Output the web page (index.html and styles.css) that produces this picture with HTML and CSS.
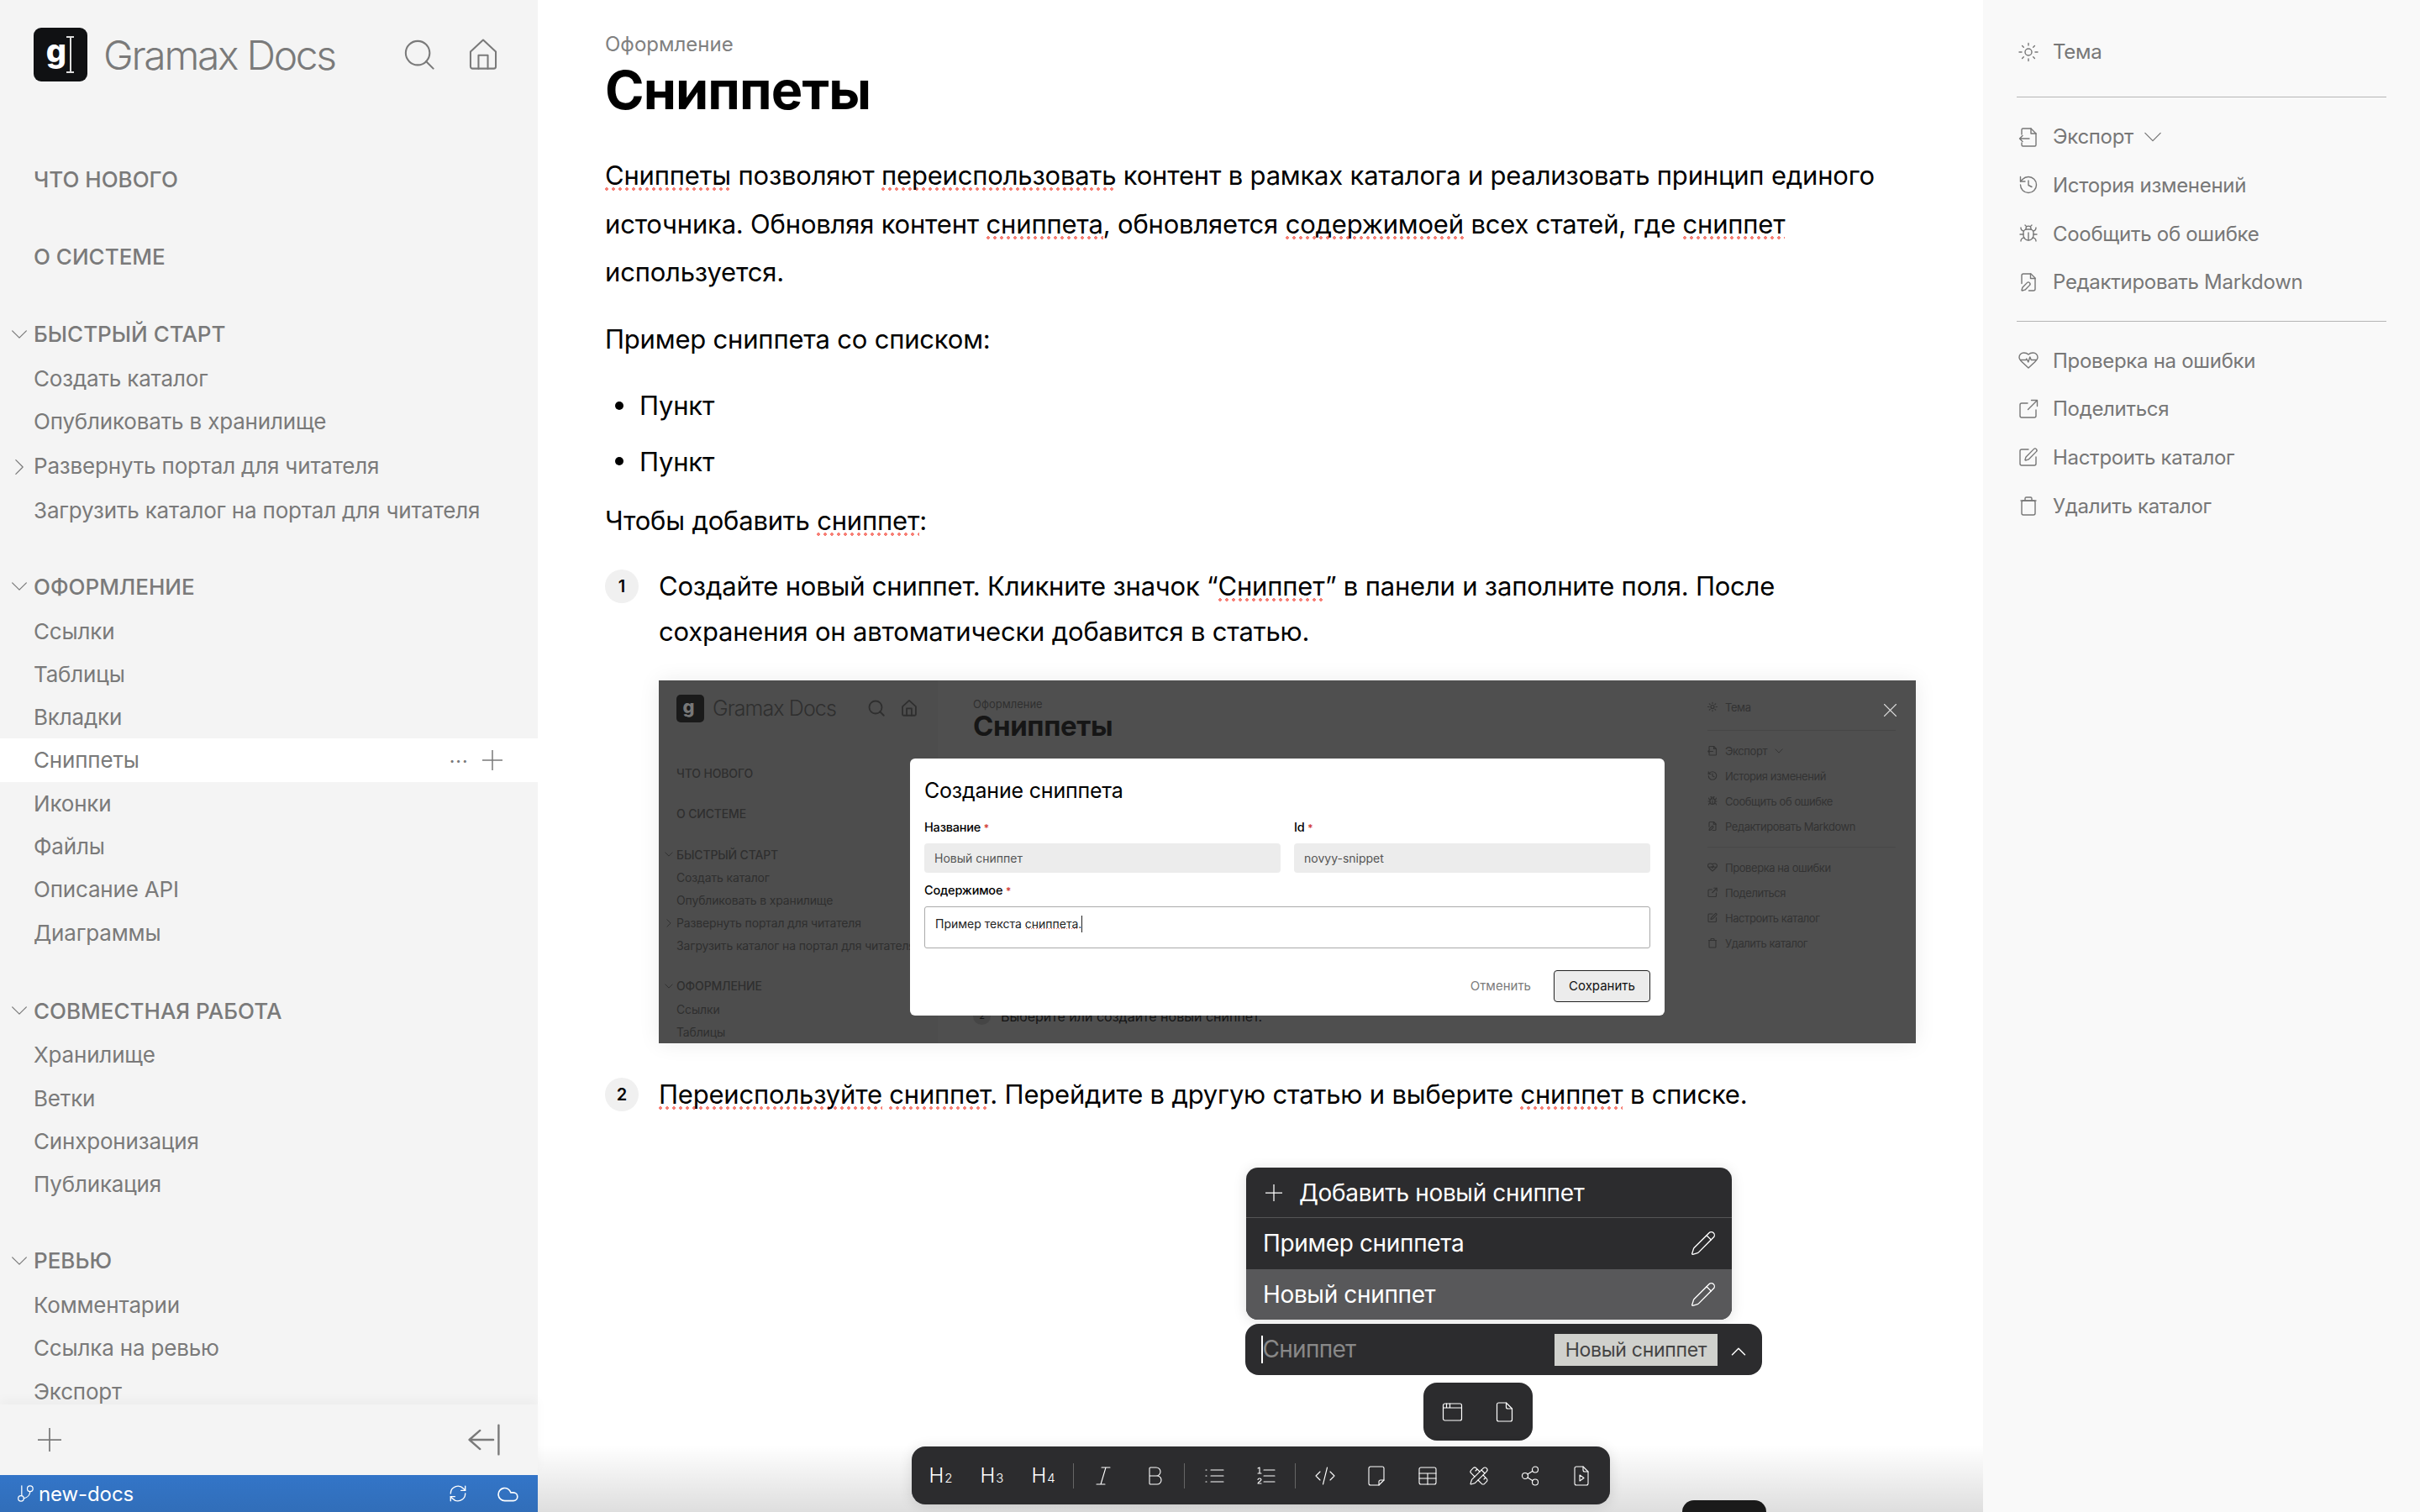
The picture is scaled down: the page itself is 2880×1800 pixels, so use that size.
FILE: index.html
```html
<!DOCTYPE html>
<html lang="ru">
<head>
    <meta charset="UTF-8">
    <title>Сниппеты - Gramax Docs</title>
    <link rel="stylesheet" href="styles.css">
</head>
<body>
    <svg class="sprite" xmlns="http://www.w3.org/2000/svg">
        <symbol id="i-search" viewBox="0 0 24 24"><circle cx="10.8" cy="10.8" r="9"/><path d="M22.5 22.5l-5.4-5.4"/></symbol>
        <symbol id="i-home" viewBox="0 0 24 24"><path d="M2.5 9.8 12 1l9.5 8.8V21a1.5 1.5 0 0 1-1.5 1.5H4A1.5 1.5 0 0 1 2.5 21z"/><path d="M8.5 22.5V12.5h7v10"/></symbol>
        <symbol id="i-sun" viewBox="0 0 24 24"><circle cx="12" cy="12" r="4"/><path d="M12 1.5V4M12 20v2.5M4.600 4.600l1.700 1.700M17.700 17.700l1.700 1.700M1 12h3M20 12h3M4.600 19.400l1.700-1.700M17.700 6.300l1.700-1.700"/></symbol>
        <symbol id="i-export" viewBox="0 0 24 24"><path d="M4 9V3.5A1.5 1.5 0 0 1 5.5 2H15l6 6v13.5a1.5 1.500 0 0 1-1.5 1.5h-14A1.500 1.500 0 0 1 4 21.500V19"/><path d="M15 2v6h6"/><path d="M13 14H1.500m3.500-3.500L1.500 14 5 17.500"/></symbol>
        <symbol id="i-history" viewBox="0 0 24 24"><path d="M2.5 12a9.500 9.500 0 1 0 9.500-9.500 10 10 0 0 0-7 2.900L2.500 8"/><path d="M2.500 2.500V8H8"/><path d="M12 7v5.500l4 2"/></symbol>
        <symbol id="i-bug" viewBox="0 0 24 24"><path d="m8 2 1.880 1.880M14.120 3.880 16 2M9 7.130v-1a3 3 0 1 1 6 0v1"/><path d="M12 20c-3.300 0-6-2.700-6-6v-3a4 4 0 0 1 4-4h4a4 4 0 0 1 4 4v3c0 3.300-2.700 6-6 6"/><path d="M12 20v-9M6.530 9C4.600 8.800 3 7.100 3 5M6 13H2M3 21c0-2.100 1.700-3.900 3.800-4M20.970 5c0 2.100-1.600 3.800-3.500 4M22 13h-4M17.200 17c2.100.1 3.800 1.900 3.800 4"/></symbol>
        <symbol id="i-filepen" viewBox="0 0 24 24"><path d="M12.500 22H18a2 2 0 0 0 2-2V7l-5-5H6a2 2 0 0 0-2 2v9.500"/><path d="M14.500 2v5.500H20"/><path d="M13.378 15.626a1 1 0 1 0-3.004-3.004l-5.010 5.012a2 2 0 0 0-.506.854l-.837 2.870a.5.5 0 0 0 .62.62l2.870-.837a2 2 0 0 0 .854-.506z"/></symbol>
        <symbol id="i-heart" viewBox="0 0 24 24"><path d="M19 14.500c1.490-1.460 4-3.710 4-6A5.500 5.500 0 0 0 17.500 3c-1.760 0-4 .5-5.500 2-1.500-1.500-3.740-2-5.500-2A5.500 5.500 0 0 0 1 8.500c0 2.300 2.500 4.550 4 6l7 6.500Z"/><path d="M2.500 11.500h6.500l.8-1.500 2 4 2-6 1.500 3.500h6"/></symbol>
        <symbol id="i-link" viewBox="0 0 24 24"><path d="M21 13v7a2 2 0 0 1-2 2H4a2 2 0 0 1-2-2V7a2 2 0 0 1 2-2h7"/><path d="m22.500 1.500-11 11M15.500 1.500h7v7"/></symbol>
        <symbol id="i-edit" viewBox="0 0 24 24"><path d="M12 3H4a2 2 0 0 0-2 2v15a2 2 0 0 0 2 2h15a2 2 0 0 0 2-2v-8"/><path d="M18.375 2.625a1 1 0 0 1 3 3l-9.013 9.014a2 2 0 0 1-.853.505l-2.873.84a.5.5 0 0 1-.62-.62l.84-2.873a2 2 0 0 1 .506-.852z"/></symbol>
        <symbol id="i-trash" viewBox="0 0 24 24"><rect x="4" y="6" width="16" height="17" rx="2"/><path d="M3 6h18M8 6V3.500A1.500 1.500 0 0 1 9.500 2h5A1.500 1.500 0 0 1 16 3.500V6"/></symbol>
        <symbol id="i-down" viewBox="0 0 24 24"><path d="M2 7l10 10L22 7"/></symbol>
        <symbol id="i-up" viewBox="0 0 24 24"><path d="M2 17 12 7l10 10"/></symbol>
        <symbol id="i-right" viewBox="0 0 24 24"><path d="M7 2l10 10L7 22"/></symbol>
        <symbol id="i-plus" viewBox="0 0 24 24"><path d="M12 0v24M0 12h24"/></symbol>
        <symbol id="i-close" viewBox="0 0 24 24"><path d="M1 1l22 22M23 1 1 23"/></symbol>
        <symbol id="i-collapse" viewBox="0 0 24 24"><path d="M23 1v22M19 12H1m8-7-8 7 8 7"/></symbol>
        <symbol id="i-branch" viewBox="0 0 24 24"><path d="M7 1v14"/><circle cx="6" cy="19" r="4"/><circle cx="19" cy="5" r="4"/><path d="M19 9a11 11 0 0 1-9 10"/></symbol>
        <symbol id="i-sync" viewBox="0 0 24 24"><path d="M2.500 12a9.500 9.500 0 0 1 16.500-6.500L21.500 8"/><path d="M21.500 2.500V8H16"/><path d="M21.500 12a9.500 9.500 0 0 1-16.500 6.500L2.500 16"/><path d="M8 16H2.500v5.500"/></symbol>
        <symbol id="i-cloud" viewBox="0 0 24 24"><path d="M17.500 20H8a7 7 0 1 1 6.710-9h2.790a4.500 4.500 0 1 1 0 9Z"/></symbol>
        <symbol id="i-pencil" viewBox="0 0 24 24"><path d="M21.174 6.812a1 1 0 0 0-3.986-3.987L3.842 16.174a2 2 0 0 0-.5.83l-1.321 4.352a.5.5 0 0 0 .623.622l4.353-1.320a2 2 0 0 0 .83-.497z"/><path d="m15 5 4 4"/></symbol>
        <symbol id="i-italic" viewBox="0 0 24 24"><path d="M20 2h-10M14 22H4M15 2 9 22"/></symbol>
        <symbol id="i-bold" viewBox="0 0 24 24"><path d="M6 12h9a5 5 0 0 1 0 10H7a1 1 0 0 1-1-1V3a1 1 0 0 1 1-1h7a5 5 0 0 1 0 10"/></symbol>
        <symbol id="i-ul" viewBox="0 0 24 24"><path d="M8 5h15M8 12h15M8 19h15M2 5h1M2 12h1M2 19h1"/></symbol>
        <symbol id="i-ol" viewBox="0 0 24 24"><path d="M10 5h13M10 12h13M10 19h13M3 3l2-1v7M3 9h4M7 21H3c0-2 4-2.500 4-4.500 0-1-1-1.500-2-1.500s-2 .5-2 1.500"/></symbol>
        <symbol id="i-code" viewBox="0 0 24 24"><path d="m18 17 5-5-5-5M6 7l-5 5 5 5M14.500 2l-5 20"/></symbol>
        <symbol id="i-note" viewBox="0 0 24 24"><path d="M15 23H5a2 2 0 0 1-2-2V3a2 2 0 0 1 2-2h14a2 2 0 0 1 2 2v14z"/><path d="M15 23v-4a2 2 0 0 1 2-2h4"/></symbol>
        <symbol id="i-table" viewBox="0 0 24 24"><rect x="2" y="2" width="20" height="20" rx="2"/><path d="M2 9h20M2 15h20M12 9v13"/></symbol>
        <symbol id="i-draw" viewBox="0 0 24 24"><path d="M13 7 8.700 2.700a2.410 2.410 0 0 0-3.400 0L2.700 5.300a2.410 2.410 0 0 0 0 3.400L7 13M8 6l2-2M18 16l2-2M17 11l4.300 4.300c.94.94.94 2.460 0 3.400l-2.600 2.600c-.94.94-2.460.94-3.400 0L11 17"/><path d="M21.174 6.812a1 1 0 0 0-3.986-3.987L3.842 16.174a2 2 0 0 0-.5.83l-1.321 4.352a.5.5 0 0 0 .623.622l4.353-1.320a2 2 0 0 0 .83-.497z"/><path d="m15 5 4 4"/></symbol>
        <symbol id="i-share" viewBox="0 0 24 24"><circle cx="18" cy="4.500" r="3.500"/><circle cx="6" cy="12" r="3.500"/><circle cx="18" cy="19.500" r="3.500"/><path d="m9 14 6 3.800M15 6.300 9 10"/></symbol>
        <symbol id="i-fileplay" viewBox="0 0 24 24"><path d="M14 1H6a2 2 0 0 0-2 2v18a2 2 0 0 0 2 2h12a2 2 0 0 0 2-2V7z"/><path d="M14 1v4a2 2 0 0 0 2 2h4M10 11l5 3.500-5 3.500z"/></symbol>
        <symbol id="i-window" viewBox="0 0 24 24"><rect x="1" y="2" width="22" height="20" rx="2"/><path d="M1 7h22M5 2v5M9 2v5"/></symbol>
        <symbol id="i-file" viewBox="0 0 24 24"><path d="M14 1H5a2 2 0 0 0-2 2v18a2 2 0 0 0 2 2h14a2 2 0 0 0 2-2V8z"/><path d="M14 1v5a2 2 0 0 0 2 2h5"/></symbol>
    </svg>

    <div class="app">
        <aside class="sidebar">
            <header class="brand">
                <div class="logo"><span class="logo-g">g</span><span class="logo-beam"></span></div>
                <span class="brand-name">Gramax Docs</span>
                <svg class="icon brand-icon"><use href="#i-search"/></svg>
                <svg class="icon brand-icon"><use href="#i-home"/></svg>
            </header>
            <nav class="nav">
                <div class="nav-group"><div class="nav-head">ЧТО НОВОГО</div></div>
                <div class="nav-group"><div class="nav-head">О СИСТЕМЕ</div></div>
                <div class="nav-group">
                    <div class="nav-head"><svg class="icon nav-arrow"><use href="#i-down"/></svg>БЫСТРЫЙ СТАРТ</div>
                    <div class="nav-item">Создать каталог</div>
                    <div class="nav-item">Опубликовать в хранилище</div>
                    <div class="nav-item nudge"><svg class="icon nav-arrow"><use href="#i-right"/></svg>Развернуть портал для читателя</div>
                    <div class="nav-item nudge">Загрузить каталог на портал для читателя</div>
                </div>
                <div class="nav-group wide-gap">
                    <div class="nav-head"><svg class="icon nav-arrow"><use href="#i-down"/></svg>ОФОРМЛЕНИЕ</div>
                    <div class="nav-item">Ссылки</div>
                    <div class="nav-item">Таблицы</div>
                    <div class="nav-item">Вкладки</div>
                    <div class="nav-item active">Сниппеты
                        <span class="row-actions"><span class="dots">•••</span><svg class="icon row-plus"><use href="#i-plus"/></svg></span>
                    </div>
                    <div class="nav-item">Иконки</div>
                    <div class="nav-item">Файлы</div>
                    <div class="nav-item">Описание API</div>
                    <div class="nav-item">Диаграммы</div>
                </div>
                <div class="nav-group">
                    <div class="nav-head"><svg class="icon nav-arrow"><use href="#i-down"/></svg>СОВМЕСТНАЯ РАБОТА</div>
                    <div class="nav-item">Хранилище</div>
                    <div class="nav-item">Ветки</div>
                    <div class="nav-item">Синхронизация</div>
                    <div class="nav-item">Публикация</div>
                </div>
                <div class="nav-group">
                    <div class="nav-head"><svg class="icon nav-arrow"><use href="#i-down"/></svg>РЕВЬЮ</div>
                    <div class="nav-item">Комментарии</div>
                    <div class="nav-item">Ссылка на ревью</div>
                    <div class="nav-item">Экспорт</div>
                </div>
            </nav>
            <div class="side-actions">
                <svg class="icon side-plus"><use href="#i-plus"/></svg>
                <svg class="icon side-collapse"><use href="#i-collapse"/></svg>
            </div>
            <div class="statusbar">
                <svg class="icon status-branch"><use href="#i-branch"/></svg>
                <span class="status-name">new-docs</span>
                <svg class="icon status-sync"><use href="#i-sync"/></svg>
                <svg class="icon status-cloud"><use href="#i-cloud"/></svg>
            </div>
        </aside>

        <main class="content">
            <div class="crumb">Оформление</div>
            <h1 class="title">Сниппеты</h1>
            <p class="para first"><span class="typo">Сниппеты</span> позволяют <span class="typo">переиспользовать</span> контент в рамках каталога и реализовать принцип единого источника. Обновляя контент <span class="typo">сниппета</span>, обновляется <span class="typo">содержимоей</span> всех статей, где <span class="typo">сниппет</span> используется.</p>
            <p class="para sample">Пример сниппета со списком:</p>
            <ul class="bullets">
                <li>Пункт</li>
                <li>Пункт</li>
            </ul>
            <p class="para how">Чтобы добавить <span class="typo">сниппет</span>:</p>
            <div class="step">
                <span class="step-num">1</span>
                <div class="step-body">Создайте новый сниппет. Кликните значок “<span class="typo">Сниппет</span>” в панели и заполните поля. После сохранения он автоматически добавится в статью.</div>
            </div>

            <div class="shot">
                <div class="shot-side">
                    <div class="shot-brand">
                        <div class="shot-logo"><span class="logo-g">g</span></div>
                        <span class="shot-name">Gramax Docs</span>
                        <svg class="icon shot-brand-icon"><use href="#i-search"/></svg>
                        <svg class="icon shot-brand-icon"><use href="#i-home"/></svg>
                    </div>
                    <div class="shot-head first-head">ЧТО НОВОГО</div>
                    <div class="shot-head">О СИСТЕМЕ</div>
                    <div class="shot-head"><svg class="icon shot-arrow"><use href="#i-down"/></svg>БЫСТРЫЙ СТАРТ</div>
                    <div class="shot-item">Создать каталог</div>
                    <div class="shot-item">Опубликовать в хранилище</div>
                    <div class="shot-item"><svg class="icon shot-arrow"><use href="#i-right"/></svg>Развернуть портал для читателя</div>
                    <div class="shot-item">Загрузить каталог на портал для читателя</div>
                    <div class="shot-head"><svg class="icon shot-arrow"><use href="#i-down"/></svg>ОФОРМЛЕНИЕ</div>
                    <div class="shot-item">Ссылки</div>
                    <div class="shot-item">Таблицы</div>
                </div>
                <div class="shot-main">
                    <div class="shot-crumb">Оформление</div>
                    <div class="shot-title">Сниппеты</div>
                    <div class="shot-step"><span class="shot-num">2</span>Выберите или создайте новый сниппет.</div>
                </div>
                <div class="shot-right">
                    <div class="shot-row"><svg class="icon"><use href="#i-sun"/></svg>Тема</div>
                    <div class="shot-rule top-rule"></div>
                    <div class="shot-row"><svg class="icon"><use href="#i-export"/></svg>Экспорт<svg class="icon shot-more"><use href="#i-down"/></svg></div>
                    <div class="shot-row"><svg class="icon"><use href="#i-history"/></svg>История изменений</div>
                    <div class="shot-row"><svg class="icon"><use href="#i-bug"/></svg>Сообщить об ошибке</div>
                    <div class="shot-row"><svg class="icon"><use href="#i-filepen"/></svg>Редактировать Markdown</div>
                    <div class="shot-rule"></div>
                    <div class="shot-row"><svg class="icon"><use href="#i-heart"/></svg>Проверка на ошибки</div>
                    <div class="shot-row"><svg class="icon"><use href="#i-link"/></svg>Поделиться</div>
                    <div class="shot-row"><svg class="icon"><use href="#i-edit"/></svg>Настроить каталог</div>
                    <div class="shot-row"><svg class="icon"><use href="#i-trash"/></svg>Удалить каталог</div>
                </div>
                <svg class="icon shot-close"><use href="#i-close"/></svg>
                <div class="modal">
                    <div class="modal-title">Создание сниппета</div>
                    <div class="modal-fields">
                        <div class="field">
                            <label class="field-label">Название <b>*</b></label>
                            <div class="field-input">Новый сниппет</div>
                        </div>
                        <div class="field">
                            <label class="field-label">Id <b>*</b></label>
                            <div class="field-input">novyy-snippet</div>
                        </div>
                    </div>
                    <label class="field-label">Содержимое <b>*</b></label>
                    <div class="field-area"><span>Пример текста <span class="typo-small">сниппета</span>.</span><span class="area-caret"></span></div>
                    <div class="modal-actions">
                        <span class="btn-cancel">Отменить</span>
                        <span class="btn-save">Сохранить</span>
                    </div>
                </div>
            </div>

            <div class="step second">
                <span class="step-num">2</span>
                <div class="step-body"><span class="typo">Переиспользуйте</span> <span class="typo">сниппет</span>. Перейдите в другую статью и выберите <span class="typo">сниппет</span> в списке.</div>
            </div>
            <div class="fade"></div>

            <div class="editor-float">
                <div class="snippet-list">
                    <div class="snippet-add"><svg class="icon snippet-plus"><use href="#i-plus"/></svg>Добавить новый сниппет</div>
                    <div class="snippet-row">Пример сниппета<svg class="icon snippet-pen"><use href="#i-pencil"/></svg></div>
                    <div class="snippet-row hover">Новый сниппет<svg class="icon snippet-pen"><use href="#i-pencil"/></svg></div>
                </div>
                <div class="snippet-input">
                    <span class="input-caret"></span>
                    <span class="input-placeholder">Сниппет</span>
                    <span class="input-tag">Новый сниппет</span>
                    <svg class="icon input-chevron"><use href="#i-up"/></svg>
                </div>
                <div class="mini-bar">
                    <svg class="icon mini-icon"><use href="#i-window"/></svg>
                    <svg class="icon mini-icon"><use href="#i-file"/></svg>
                </div>
            </div>

            <div class="toolbar">
                <span class="tool tool-text">H<small>2</small></span>
                <span class="tool tool-text">H<small>3</small></span>
                <span class="tool tool-text">H<small>4</small></span>
                <span class="tool-sep"></span>
                <span class="tool"><svg class="icon"><use href="#i-italic"/></svg></span>
                <span class="tool"><svg class="icon"><use href="#i-bold"/></svg></span>
                <span class="tool-sep"></span>
                <span class="tool"><svg class="icon"><use href="#i-ul"/></svg></span>
                <span class="tool"><svg class="icon"><use href="#i-ol"/></svg></span>
                <span class="tool-sep"></span>
                <span class="tool"><svg class="icon"><use href="#i-code"/></svg></span>
                <span class="tool"><svg class="icon"><use href="#i-note"/></svg></span>
                <span class="tool"><svg class="icon"><use href="#i-table"/></svg></span>
                <span class="tool"><svg class="icon"><use href="#i-draw"/></svg></span>
                <span class="tool"><svg class="icon"><use href="#i-share"/></svg></span>
                <span class="tool"><svg class="icon"><use href="#i-fileplay"/></svg></span>
            </div>
            <div class="corner-tab"></div>
        </main>

        <aside class="panel">
            <div class="panel-row"><svg class="icon"><use href="#i-sun"/></svg>Тема</div>
            <div class="panel-rule top-rule"></div>
            <div class="panel-row"><svg class="icon"><use href="#i-export"/></svg>Экспорт<svg class="icon panel-more"><use href="#i-down"/></svg></div>
            <div class="panel-row"><svg class="icon"><use href="#i-history"/></svg>История изменений</div>
            <div class="panel-row"><svg class="icon"><use href="#i-bug"/></svg>Сообщить об ошибке</div>
            <div class="panel-row"><svg class="icon"><use href="#i-filepen"/></svg>Редактировать Markdown</div>
            <div class="panel-rule"></div>
            <div class="panel-row"><svg class="icon"><use href="#i-heart"/></svg>Проверка на ошибки</div>
            <div class="panel-row"><svg class="icon"><use href="#i-link"/></svg>Поделиться</div>
            <div class="panel-row"><svg class="icon"><use href="#i-edit"/></svg>Настроить каталог</div>
            <div class="panel-row"><svg class="icon"><use href="#i-trash"/></svg>Удалить каталог</div>
        </aside>
    </div>
</body>
</html>
```

FILE: styles.css
```css
* {
    box-sizing: border-box;
}
html, body {
    margin: 0;
    height: 100%;
}
body {
    background: #fff;
    color: #000;
    font-family: Inter, "Liberation Sans", sans-serif;
    overflow: hidden;
}
.sprite {
    position: absolute;
    width: 0;
    height: 0;
}
.icon {
    fill: none;
    stroke: currentColor;
    stroke-width: 1.5;
    stroke-linecap: round;
    stroke-linejoin: round;
    flex: none;
}
.app {
    display: flex;
    height: 100vh;
}

/* left sidebar */
.sidebar {
    width: 640px;
    flex: none;
    display: flex;
    flex-direction: column;
    background: #f4f4f4;
    color: #7a7a7a;
}
.brand {
    display: flex;
    align-items: center;
    height: 64px;
    margin: 33px 46px 89px 40px;
}
.logo {
    width: 64px;
    height: 64px;
    border-radius: 9px;
    background: #101113;
    display: flex;
    align-items: center;
    justify-content: center;
    position: relative;
}
.logo-g {
    color: #fff;
    font-weight: 800;
    font-size: 38px;
    line-height: 1;
    margin: -10px 10px 0 0;
}
.logo-beam {
    position: absolute;
    left: 39px;
    top: 10px;
    width: 9px;
    height: 44px;
    border: solid #ddd;
    border-width: 2px 0;
    background: linear-gradient(#ddd, #ddd) center / 2px 100% no-repeat;
}
.brand-name {
    margin-left: 19px;
    font-size: 48px;
    font-weight: 300;
    letter-spacing: -2.3px;
    flex: 1;
}
.brand-icon {
    width: 38px;
    height: 38px;
    stroke-width: 1.3;
}
.brand-icon + .brand-icon {
    margin-left: 38px;
}
.nav {
    flex: 1;
    min-height: 0;
    overflow: hidden;
}
.nav-group {
    margin-bottom: 38.4px;
}
.nav-group.wide-gap {
    margin-bottom: 40.6px;
}
.nav-head, .nav-item {
    padding-left: 40px;
    display: flex;
    align-items: center;
    position: relative;
    font-size: 26px;
    white-space: nowrap;
}
.nav-head {
    height: 54px;
    font-weight: 500;
}
.nav-item {
    height: 51.3px;
    font-weight: 400;
    letter-spacing: -0.18px;
}
.nav-item.nudge {
    margin-top: 1.5px;
}
.nav-arrow {
    position: absolute;
    left: 13px;
    top: 17px;
    width: 20px;
    height: 20px;
}
.nav-item.active {
    background: #fff;
}
.row-actions {
    margin-left: auto;
    padding-right: 42px;
    display: flex;
    align-items: center;
    gap: 16px;
}
.dots {
    font-size: 10px;
    letter-spacing: 2px;
}
.row-plus {
    width: 24px;
    height: 24px;
}
.side-actions {
    height: 84px;
    flex: none;
    display: flex;
    align-items: center;
    justify-content: space-between;
    padding: 0 45px;
    background: #f4f4f4;
    box-shadow: 0 -6px 12px rgba(0, 0, 0, 0.03);
    position: relative;
}
.side-plus {
    width: 28px;
    height: 28px;
}
.side-collapse {
    width: 38px;
    height: 38px;
}
.statusbar {
    height: 44px;
    flex: none;
    display: flex;
    align-items: center;
    padding: 0 20px;
    background: linear-gradient(#3375c8, #316eb9);
    color: #fff;
}
.status-branch {
    width: 20px;
    height: 20px;
}
.status-name {
    margin-left: 6px;
    font-size: 24px;
    letter-spacing: -0.1px;
    flex: 1;
}
.status-sync {
    width: 22px;
    height: 22px;
}
.status-cloud {
    margin-left: 34px;
    width: 30px;
    height: 26px;
}

/* article */
.content {
    flex: 1;
    min-width: 0;
    padding: 37px 80px 0;
    position: relative;
    overflow: hidden;
}
.crumb {
    font-size: 24px;
    line-height: 32px;
    color: #808080;
}
.title {
    margin: 6px 0 0;
    font-size: 63px;
    line-height: 64px;
    font-weight: 700;
    letter-spacing: -0.9px;
}
.para {
    margin: 0;
    font-size: 31px;
    line-height: 57.6px;
    letter-spacing: -0.2px;
}
.para.first {
    margin-top: 41px;
}
.para.sample {
    margin-top: 22px;
}
.para.how {
    margin-top: 12.8px;
}
/* spellcheck dots under unknown words */
.typo {
    background: radial-gradient(circle, #f77f75 1.6px, transparent 2.1px) -2px bottom / 8px 4px repeat-x;
}
.bullets {
    list-style: none;
    margin: 22px 0 0;
    padding: 0 0 0 12px;
    font-size: 31px;
    line-height: 57.6px;
    letter-spacing: -0.2px;
}
.bullets li {
    display: flex;
    align-items: center;
    gap: 19px;
}
.bullets li::before {
    content: "";
    width: 10px;
    height: 10px;
    border-radius: 50%;
    background: #000;
}
.bullets li + li {
    margin-top: 8.6px;
}
.step {
    display: flex;
    margin-top: 22px;
    font-size: 31px;
    line-height: 54px;
    letter-spacing: -0.2px;
}
.step.second {
    margin-top: 34px;
}
.step-num {
    flex: none;
    width: 40px;
    height: 40px;
    margin: 7px 24px 0 0;
    border-radius: 50%;
    background: #f0f0f0;
    display: flex;
    align-items: center;
    justify-content: center;
    font-size: 20px;
    font-weight: 600;
}

/* screenshot inside the article */
.shot {
    margin: 31px 0 0 64px;
    width: 1496px;
    height: 432px;
    background: #4f4f4f;
    box-shadow: 0 0 24px rgba(0, 0, 0, 0.08);
    display: flex;
    position: relative;
    overflow: hidden;
    color: #2f2f2f;
}
.shot .icon {
    stroke-width: 2.2;
}
.shot-side {
    width: 332px;
    flex: none;
    padding: 17px 0 0 21px;
    background: #4d4d4d;
    font-size: 14px;
    letter-spacing: -0.15px;
}
.shot-brand {
    display: flex;
    align-items: center;
    height: 33px;
    white-space: nowrap;
}
.shot-logo {
    width: 33px;
    height: 33px;
    border-radius: 5px;
    background: #1a1a1a;
    display: flex;
    align-items: center;
    justify-content: center;
}
.shot-logo .logo-g {
    font-size: 22px;
    margin: -5px 4px 0 0;
    color: #777;
}
.shot-name {
    margin-left: 10px;
    font-size: 25px;
    font-weight: 300;
    letter-spacing: -0.9px;
    width: 185px;
}
.shot-brand-icon {
    width: 20px;
    height: 20px;
}
.shot-brand-icon + .shot-brand-icon {
    margin-left: 19px;
}
.shot-head, .shot-item {
    height: 27.2px;
    display: flex;
    align-items: center;
    position: relative;
    white-space: nowrap;
}
.shot-head {
    font-weight: 500;
    margin-top: 21px;
}
.shot-head.first-head {
    margin-top: 47.5px;
}
.shot-arrow {
    position: absolute;
    left: -14px;
    top: 9px;
    width: 10px;
    height: 10px;
}
.shot-main {
    flex: 1;
    padding: 20px 0 0 42px;
}
.shot-crumb {
    font-size: 13px;
    line-height: 16px;
}
.shot-title {
    font-size: 33px;
    line-height: 36px;
    font-weight: 700;
    letter-spacing: -0.4px;
    color: #161616;
}
.shot-step {
    margin-top: 316px;
    display: flex;
    align-items: center;
    gap: 12px;
    font-size: 16px;
    line-height: 24px;
    color: #151515;
    white-space: nowrap;
}
.shot-num {
    width: 21px;
    height: 21px;
    border-radius: 50%;
    background: #454545;
    text-align: center;
    font-size: 11px;
    line-height: 21px;
}
.shot-right {
    width: 248px;
    flex: none;
    margin-left: auto;
    padding: 17px 24px 0 0;
    font-size: 13px;
    letter-spacing: -0.44px;
    color: #333;
}
.shot-row {
    height: 30px;
    display: flex;
    align-items: center;
    gap: 9px;
    white-space: nowrap;
}
.shot-row .icon {
    width: 12px;
    height: 13px;
}
.shot-row .shot-more {
    width: 10px;
    height: 10px;
}
.shot-rule {
    height: 1px;
    background: #474747;
    margin: 9px 0;
}
.shot-rule.top-rule {
    margin-top: 12px;
}
.shot-close {
    position: absolute;
    left: 1458px;
    top: 28px;
    width: 15px;
    height: 15px;
    color: #ddd;
}
.modal {
    position: absolute;
    left: 299px;
    top: 93px;
    width: 898px;
    height: 306px;
    padding: 22px 17px 0;
    background: #fff;
    border-radius: 6px;
    color: #000;
    display: flex;
    flex-direction: column;
}
.modal-title {
    font-size: 25px;
    line-height: 32px;
    letter-spacing: -0.2px;
}
.modal-fields {
    display: flex;
    gap: 16px;
    margin-top: 18px;
}
.field {
    flex: 1;
}
.field-label {
    display: block;
    font-size: 14.5px;
    line-height: 20px;
    font-weight: 500;
    letter-spacing: -0.2px;
}
.field-label b {
    color: #d0342c;
    font-weight: 500;
    font-size: 12px;
}
.field-input {
    height: 35px;
    margin: 8px 0 11px;
    padding-left: 12px;
    background: #ececec;
    border-radius: 4px;
    font-size: 14px;
    line-height: 35px;
    color: #555;
}
.field-area {
    height: 50px;
    margin-top: 8px;
    padding: 10px 12px;
    border: 1px solid #aaa;
    border-radius: 3px;
    font-size: 14px;
    line-height: 20px;
    color: #222;
    display: flex;
}
.typo-small {
    background: radial-gradient(circle, #f4736a 0.7px, transparent 1px) left bottom 1px / 3px 3px repeat-x;
}
.area-caret {
    width: 1px;
    height: 20px;
    background: #222;
}
.modal-actions {
    margin-top: 26px;
    display: flex;
    align-items: center;
    justify-content: flex-end;
    gap: 27px;
    font-size: 15px;
}
.btn-cancel {
    color: #7c7c7c;
}
.btn-save {
    width: 115px;
    height: 38px;
    border: 1px solid #222;
    border-radius: 4px;
    background: #ececec;
    display: flex;
    align-items: center;
    justify-content: center;
    color: #111;
}

/* floating editor controls */
.fade {
    position: absolute;
    left: 0;
    right: 0;
    bottom: 0;
    height: 80px;
    background: linear-gradient(rgba(0, 0, 0, 0), rgba(0, 0, 0, 0.13));
}
.editor-float {
    position: absolute;
    left: 842px;
    top: 1390px;
    width: 615px;
    display: flex;
    flex-direction: column;
    color: #fff;
}
.snippet-list {
    margin-left: 1px;
    width: 578px;
    border-radius: 14px;
    background: #2c2c2e;
    overflow: hidden;
    box-shadow: 0 2px 16px rgba(0, 0, 0, 0.12);
    font-size: 28px;
    letter-spacing: -0.35px;
}
.snippet-add {
    height: 60px;
    display: flex;
    align-items: center;
    gap: 20px;
    padding-left: 23px;
    border-bottom: 1px solid #555;
}
.snippet-plus {
    width: 20px;
    height: 20px;
}
.snippet-row {
    height: 60.5px;
    display: flex;
    align-items: center;
    justify-content: space-between;
    padding: 0 18px 0 20px;
}
.snippet-row.hover {
    background: #58585a;
}
.snippet-pen {
    width: 32px;
    height: 32px;
    stroke-width: 1;
}
.snippet-input {
    margin-top: 5px;
    height: 61px;
    border-radius: 16px;
    background: #2c2c2e;
    display: flex;
    align-items: center;
    padding-left: 19px;
}
.input-caret {
    width: 1.5px;
    height: 33px;
    background: #fff;
}
.input-placeholder {
    font-size: 28px;
    line-height: 32px;
    margin-top: -2px;
    letter-spacing: -0.7px;
    color: #888;
    flex: 1;
}
.input-tag {
    width: 194px;
    height: 38px;
    background: #d0d1cd;
    color: #444;
    font-size: 23px;
    letter-spacing: -0.3px;
    line-height: 38px;
    text-align: center;
}
.input-chevron {
    margin: 4px 19px 0 16px;
    width: 18px;
    height: 18px;
    stroke-width: 2;
}
.mini-bar {
    align-self: flex-start;
    margin: 9px 0 0 212px;
    width: 130px;
    height: 69px;
    border-radius: 16px;
    background: #2c2c2e;
    display: flex;
    align-items: center;
    gap: 37px;
    padding-left: 22px;
}
.mini-icon {
    width: 25px;
    height: 24px;
    stroke-width: 1.2;
}
.toolbar {
    position: absolute;
    left: 445px;
    top: 1722px;
    width: 831px;
    height: 69px;
    padding: 0 0 0 4px;
    border-radius: 16px;
    background: #2c2c2e;
    color: #fff;
    display: flex;
    align-items: center;
    box-shadow: 0 2px 16px rgba(0, 0, 0, 0.12);
}
.tool {
    width: 61px;
    flex: none;
    display: flex;
    justify-content: center;
    align-items: center;
}
.tool .icon {
    width: 24px;
    height: 24px;
    stroke-width: 1.1;
}
.tool-text {
    font-size: 24px;
    font-weight: 300;
}
.tool-text small {
    font-size: 15px;
    margin-top: 6px;
    margin-left: 1px;
}
.tool-sep {
    flex: none;
    width: 1px;
    height: 30px;
    margin: 0 4px 0 5px;
    background: #666;
}
.corner-tab {
    position: absolute;
    left: 1362px;
    bottom: 0;
    width: 100px;
    height: 14px;
    border-radius: 22px 22px 0 0;
    background: #1a1a1a;
}

/* right panel */
.panel {
    width: 520px;
    flex: none;
    padding: 33px 40px 0;
    background: #f9f9f9;
    color: #777;
    font-size: 24px;
    letter-spacing: -0.3px;
}
.panel-row {
    height: 57.6px;
    display: flex;
    align-items: center;
    white-space: nowrap;
}
.panel-row .icon {
    width: 24px;
    height: 24px;
    margin: 0 17px 0 2px;
    stroke-width: 1.4;
}
.panel-row .panel-more {
    width: 22px;
    height: 22px;
    margin: 0 0 0 12px;
}
.panel-rule {
    height: 1px;
    background: #b5b5b5;
    margin: 18px 0 17px;
}
.panel-rule.top-rule {
    margin: 24px 0 18.5px;
}
```
